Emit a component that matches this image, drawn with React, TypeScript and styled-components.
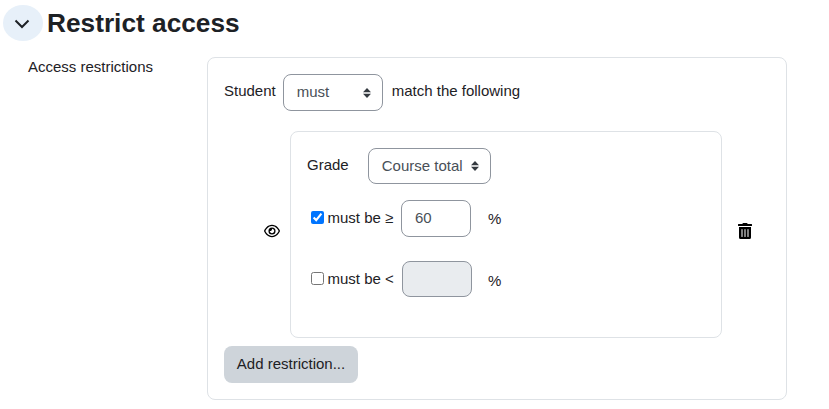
import React from "react";
import styled, { createGlobalStyle } from "styled-components";
import { FaRegEye } from "react-icons/fa6";
import { FaTrashAlt } from "react-icons/fa";

const GlobalStyle = createGlobalStyle`
	html, body {
		margin: 0;
		background: #fff;
		color: #1d2125;
		font-family: "Liberation Sans", Arial, sans-serif;
		font-size: 15px;
		line-height: 22.5px;
	}
	* { box-sizing: border-box; }
`;

const Page = styled.div`
	width: 829px;
	height: 409px;
	padding: 5px 0 0 3px;
	overflow: hidden;
`;

const Header = styled.div`
	display: flex;
	align-items: center;
	gap: 4px;
	height: 36px;
`;

const Collapse = styled.button`
	width: 40px;
	height: 36px;
	padding: 2px 2px 0 0;
	border: 0;
	border-radius: 50%;
	background: #e7f0f9;
	color: #1d2125;
	display: flex;
	align-items: center;
	justify-content: center;
`;

const Title = styled.h3`
	margin: 0;
	font-size: 26.25px;
	line-height: 36px;
	font-weight: 700;
`;

const FormRow = styled.div`
	display: flex;
	margin-top: 16px;
`;

const FieldLabel = styled.div`
	flex: 0 0 204px;
	margin-top: -1px;
	padding-left: 25px;
`;

const Card = styled.div`
	flex: 0 0 580px;
	height: 343px;
	padding: 16px 16px 0;
	border: 1px solid #dee2e6;
	border-radius: 8px;
`;

const TopLine = styled.div`
	display: flex;
	align-items: center;
	height: 37px;
	span { position: relative; top: -1px; }
`;

const Select = styled.div<{ $width: number; $height: number }>`
	flex: none;
	width: ${(p) => p.$width}px;
	height: ${(p) => p.$height}px;
	padding: 0 11px 0 13px;
	display: flex;
	align-items: center;
	justify-content: space-between;
	border: 1px solid #8f959e;
	border-radius: 8px;
	background: #fff;
	color: #495057;
	white-space: nowrap;
`;

const TopSelect = styled(Select)`
	margin: 0 9px 0 7px;
`;

const Branch = styled.div`
	display: flex;
	align-items: center;
	margin-top: 20px;
	padding-left: 40px;
`;

const IconSlot = styled.div<{ $gap: number }>`
	width: 26px;
	margin-left: ${(p) => p.$gap}px;
	padding-bottom: 7px;
	display: flex;
	justify-content: flex-start;
	color: #000;
`;

const BranchBox = styled.div`
	width: 432px;
	height: 207px;
	padding: 16px 0 0 16px;
	border: 1px solid #dee2e6;
	border-radius: 8px;
`;

const GradeLine = styled.div`
	display: flex;
	align-items: center;
	gap: 19px;
	height: 36px;
	span { position: relative; top: -1px; }
`;

const CheckLine = styled.div<{ $top: number }>`
	display: flex;
	align-items: center;
	height: 37px;
	margin-top: ${(p) => p.$top}px;
	padding-left: 4px;
`;

const Check = styled.label<{ $width: number }>`
	display: flex;
	align-items: center;
	gap: 3.5px;
	width: ${(p) => p.$width}px;
`;

const Box = styled.input`
	width: 13px;
	height: 13px;
	margin: 0 0 2px;
	accent-color: #0075ff;
`;

const Amount = styled.div<{ $disabled?: boolean }>`
	align-self: flex-start;
	width: 70px;
	height: ${(p) => (p.$disabled ? 36 : 37)}px;
	padding: 0 13px;
	display: flex;
	align-items: center;
	border: 1px solid #8f959e;
	border-radius: 8px;
	color: #495057;
	background: ${(p) => (p.$disabled ? "#e9ecef" : "#fff")};
`;

const Percent = styled.span<{ $left: number; $top: number }>`
	margin-left: ${(p) => p.$left}px;
	position: relative;
	top: ${(p) => p.$top}px;
`;

const AddButton = styled.button`
	display: block;
	width: 134px;
	height: 37px;
	margin-top: 8px;
	padding: 0;
	border: 0;
	border-radius: 8px;
	background: #ced4da;
	color: #1d2125;
	font: inherit;
`;

const Carets = () => (
	<svg width="8" height="10" viewBox="0 0 8 10">
		<path d="M4 0 8 4.2H0zM4 10 0 5.8h8z" fill="#343a40" />
	</svg>
);

const App: React.FC = () => {
	return (
		<Page>
			<GlobalStyle />
			<Header>
				<Collapse aria-label="Collapse">
					<svg width="16" height="10" viewBox="0 0 16 10">
						<path d="M1.5 1.5 8 8 14.5 1.5" fill="none" stroke="#1d2125" strokeWidth="2" />
					</svg>
				</Collapse>
				<Title>Restrict access</Title>
			</Header>
			<FormRow>
				<FieldLabel>Access restrictions</FieldLabel>
				<Card>
					<TopLine>
						<span>Student</span>
						<TopSelect $width={100} $height={37}>must<Carets /></TopSelect>
						<span>match the following</span>
					</TopLine>
					<Branch>
						<IconSlot $gap={0}><FaRegEye size={16} /></IconSlot>
						<BranchBox>
							<GradeLine>
								<span>Grade</span>
								<Select $width={123} $height={36}>Course total<Carets /></Select>
							</GradeLine>
							<CheckLine $top={16}>
								<Check $width={90}><Box type="checkbox" defaultChecked />must be ≥</Check>
								<Amount>60</Amount>
								<Percent $left={17} $top={1}>%</Percent>
							</CheckLine>
							<CheckLine $top={24}>
								<Check $width={91}><Box type="checkbox" />must be &lt;</Check>
								<Amount $disabled />
								<Percent $left={16} $top={2}>%</Percent>
							</CheckLine>
						</BranchBox>
						<IconSlot $gap={15}><FaTrashAlt size={16} /></IconSlot>
					</Branch>
					<AddButton>Add restriction...</AddButton>
				</Card>
			</FormRow>
		</Page>
	);
};

export default App;
